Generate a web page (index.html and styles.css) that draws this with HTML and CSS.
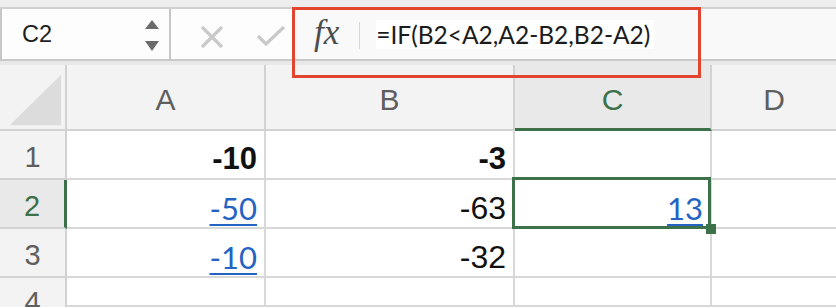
FILE: index.html
```html
<!DOCTYPE html>
<html>
<head>
    <meta charset="utf-8">
    <title>Sheet - formula bar</title>
    <link rel="stylesheet" href="styles.css">
</head>
<body>
    <div class="toolbar">
        <div class="namebox">
            <span class="name">C2</span>
            <svg class="spin" width="16" height="34" viewBox="0 0 16 34">
                <polygon points="8,2 15,11 1,11" fill="#6b6b6b"/>
                <polygon points="1,23 15,23 8,33" fill="#6b6b6b"/>
            </svg>
        </div>
        <div class="actions">
            <svg width="24" height="24" viewBox="0 0 24 24">
                <path d="M2 2 L22 22 M22 2 L2 22" stroke="#c9c9c9" stroke-width="3.2" fill="none"/>
            </svg>
            <svg width="30" height="24" viewBox="0 0 30 24">
                <path d="M2 11 L10 19 L28 2" stroke="#c9c9c9" stroke-width="3.2" fill="none"/>
            </svg>
        </div>
        <div class="formula">
            <span class="fx">fx</span>
            <span class="sep"></span>
            <span class="ftext">=IF(B2&lt;A2,A2-B2,B2-A2)</span>
        </div>
    </div>

    <!-- annotation box drawn over the formula bar -->
    <div class="annot"></div>

    <div class="sheet">
        <div class="hd corner">
            <svg width="67" height="66" viewBox="0 0 67 66">
                <polygon points="63,10 63,62 10,62" fill="#dcdcdc"/>
            </svg>
        </div>
        <div class="hd col">A</div>
        <div class="hd col">B</div>
        <div class="hd col active">C</div>
        <div class="hd col last">D</div>

        <div class="hd row">1</div>
        <div class="cell bold">-10</div>
        <div class="cell bold">-3</div>
        <div class="cell"></div>
        <div class="cell last"></div>

        <div class="hd row active">2</div>
        <div class="cell"><span class="link">-50</span></div>
        <div class="cell">-63</div>
        <div class="cell selected">
            <span class="link">13</span>
            <div class="sel"></div>
            <div class="handle"></div>
        </div>
        <div class="cell last"></div>

        <div class="hd row">3</div>
        <div class="cell"><span class="link">-10</span></div>
        <div class="cell">-32</div>
        <div class="cell"></div>
        <div class="cell last"></div>

        <div class="hd row cut">4</div>
        <div class="cell"></div>
        <div class="cell"></div>
        <div class="cell"></div>
        <div class="cell last"></div>
    </div>
</body>
</html>
```

FILE: styles.css
```css
body {
    margin: 0;
    width: 836px;
    height: 308px;
    overflow: hidden;
    position: relative;
    background: #ffffff;
    font-family: "Liberation Sans", Arial, sans-serif;
}

.toolbar {
    display: flex;
    height: 54px;
    background: #fdfdfd;
    border-top: 7px solid #ededed;
    box-shadow: inset 0 2px 0 #d0d0d0;
    border-bottom: 4px solid #e8e8e8;
    position: relative;
}

.toolbar::after {
    content: "";
    position: absolute;
    left: 0;
    right: 0;
    bottom: 0;
    height: 2px;
    background: #c9c9c9;
}

.namebox {
    display: flex;
    align-items: center;
    justify-content: space-between;
    border-left: 2px solid #c6c6c6;
    border-right: 2px solid #c6c6c6;
    padding: 0 9px 0 20px;
    box-sizing: border-box;
    width: 171px;
    margin-top: 2px;
    margin-bottom: 2px;
}

.name {
    font-size: 23.5px;
    color: #1e1e1e;
}

.spin {
    margin-top: 1px;
}

.actions {
    display: flex;
    align-items: center;
    gap: 32px;
    padding: 6px 0 0 29px;
    width: 121px;
    box-sizing: border-box;
}

.formula {
    display: flex;
    align-items: center;
    flex: 1;
    padding-left: 22px;
    background: #f9f9f9;
    margin-top: 2px;
    margin-bottom: 2px;
}

.fx {
    font-family: "Liberation Serif", "Times New Roman", serif;
    font-style: italic;
    font-size: 35px;
    color: #4d4d4d;
    margin-top: -2px;
}

.sep {
    width: 1px;
    height: 27px;
    background: #d8d8d8;
    margin: 3px 16px 0 20px;
}

.ftext {
    font-family: Lato, "Open Sans", sans-serif;
    font-size: 24.5px;
    color: #1b1b1b;
    background: #ffffff;
    padding-right: 4px;
}

.annot {
    position: absolute;
    left: 292px;
    top: 7px;
    width: 403px;
    height: 65px;
    border: 3px solid #e2452f;
}

.sheet {
    display: grid;
    grid-template-columns: 67px 199px 249px 197px 1fr;
    grid-template-rows: 66px 49px 49px 49px 29px;
}

.hd {
    background: #f3f3f3;
    color: #5f5f5f;
    border-right: 2px solid #d2d2d2;
    border-bottom: 2px solid #d2d2d2;
    display: flex;
    align-items: center;
    justify-content: center;
    box-sizing: border-box;
    font-size: 30px;
}

.hd.col {
    padding-top: 6px;
}

.hd.row {
    font-size: 29px;
    padding-top: 5px;
}

.hd.row.cut {
    align-items: flex-start;
    border-bottom: none;
    overflow: hidden;
    padding-top: 8px;
}

.hd.corner {
    padding: 0;
}

.hd.active {
    background: #e9e9e9;
    color: #3c7149;
}

.hd.col.active {
    border-bottom: 3px solid #3c7149;
}

.hd.row.active {
    border-right: 3px solid #3c7149;
}

.hd.last, .cell.last {
    border-right: none;
}

.cell {
    border-right: 2px solid #d8d8d8;
    border-bottom: 2px solid #d8d8d8;
    box-sizing: border-box;
    text-align: right;
    padding: 7px 7px 0 0;
    font-size: 32px;
    line-height: 42px;
    color: #111;
    position: relative;
}

.cell.bold {
    font-weight: bold;
    font-size: 31px;
}

.link {
    font-family: Lato, "Open Sans", sans-serif;
    font-size: 31px;
    color: #2563c2;
    text-decoration: underline;
    text-decoration-thickness: 2px;
    text-underline-offset: 4px;
}

.sel {
    position: absolute;
    left: -3px;
    top: -3px;
    right: -1px;
    bottom: -2px;
    border: 3px solid #3c7149;
}

.handle {
    position: absolute;
    z-index: 2;
    left: 191px;
    top: 44px;
    width: 10px;
    height: 10px;
    background: #3c7149;
}
```
